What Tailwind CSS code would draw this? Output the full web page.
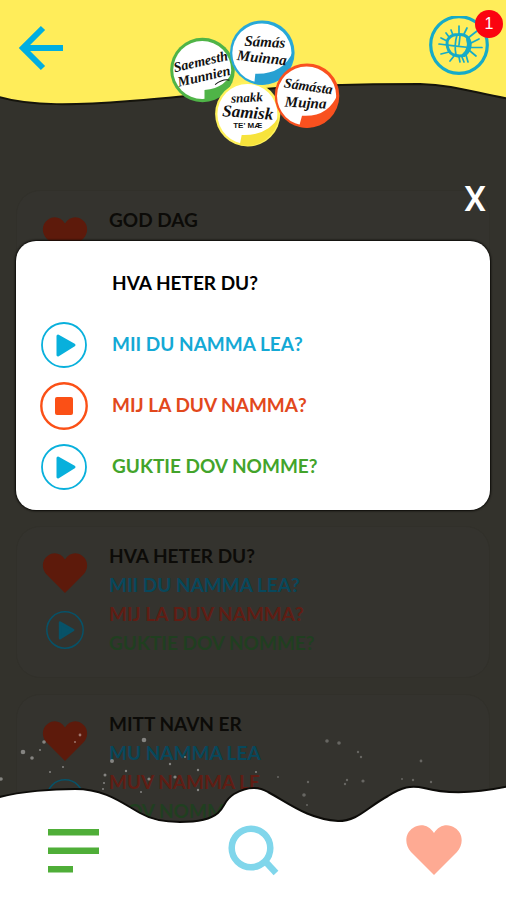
<!DOCTYPE html>
<html lang="no">
<head>
    <meta charset="UTF-8">
    <meta name="viewport" content="width=device-width, initial-scale=1.0">
    <title>Snakk samisk te' mæ</title>
    <script src="https://cdn.jsdelivr.net/npm/@tailwindcss/browser@4"></script>
</head>
<body class="bg-[#33322c] font-['Lato','Open_Sans',sans-serif] text-[19px] font-bold">
    <!-- Shared icons -->
    <svg class="hidden">
        <symbol id="heart" viewBox="0 0 56 50">
            <path d="M28 50 L5 27 C-2 19 -1 8 7 3 C14 -2 23 0 28 8 C33 0 42 -2 49 3 C57 8 58 19 51 27 Z" fill="currentColor"/>
        </symbol>
        <symbol id="play" viewBox="0 0 46 46">
            <circle cx="23" cy="23" r="22" fill="none" stroke="currentColor" stroke-width="1.8"/>
            <path d="M17 14 L33 23 L17 33 Z" fill="currentColor" stroke="currentColor" stroke-width="3" stroke-linejoin="round"/>
        </symbol>
        <symbol id="stop" viewBox="0 0 48 48">
            <circle cx="24" cy="24" r="22.7" fill="none" stroke="currentColor" stroke-width="2.4"/>
            <rect x="15" y="15" width="18" height="18" rx="2" fill="currentColor"/>
        </symbol>
    </svg>

    <div class="relative min-h-screen overflow-hidden">
        <!-- Header -->
        <header class="absolute inset-x-0 top-0 z-20">
            <svg class="absolute inset-x-0 top-0 -z-10 h-[106px] w-full" viewBox="0 0 506 106" preserveAspectRatio="none">
                <path d="M-4 96 C30 107 78 105 130 101 C180 97 225 92 265 89 C310 85 370 84 420 84 C455 85 475 93 510 99 V-4 H-4 Z" fill="#ffed5a" stroke="#15140c" stroke-width="2"/>
            </svg>
            <div class="grid grid-cols-3 items-start pt-4 pr-[17px] pl-[18px]">
                <a href="#" aria-label="Tilbake" class="mt-2 block w-12 text-[#00aee0]">
                    <svg class="h-12 w-12" viewBox="0 0 48 48" fill="none" stroke="currentColor" stroke-width="6">
                        <path d="M4 24 H45"/>
                        <path d="M25 4 L5 24 L25 44"/>
                    </svg>
                </a>
                <a href="#" aria-label="Hjem" class="mt-1 justify-self-center">
                    <svg class="h-32 w-[172px]" viewBox="168 20 172 128" font-family="'Liberation Serif', cursive" font-style="italic" font-weight="bold" text-anchor="middle" fill="#111">
                        <g transform="translate(202.5 70)">
                            <circle r="32.3" fill="#4fb447"/>
                            <circle r="29" cx="-.3" fill="#fff"/>
                            <path d="M2 20 V31 A31 31 0 0 0 31 -2 Q25 18 2 20" fill="#4fb447"/>
                            <g transform="rotate(-13)">
                                <text y="-4" font-size="14">Saemesth</text>
                                <text y="11" font-size="14">Munnien</text>
                                <path d="M9 17 Q18 13 24 16" fill="none" stroke="#111"/>
                            </g>
                        </g>
                        <g transform="translate(247.7 114)">
                            <circle r="32.6" fill="#fff25c"/>
                            <circle r="30" cx="-.3" fill="#fff"/>
                            <path d="M-6 21 L-8 31 A32 32 0 0 0 31 3 Q20 22 -6 21" fill="#f7e33c"/>
                            <text y="-12" font-size="13" transform="rotate(-3)">snakk</text>
                            <text y="4" font-size="17" transform="rotate(4)">Samisk</text>
                            <text y="14" font-size="8" font-style="normal" font-family="'Liberation Sans', sans-serif">TE' MÆ</text>
                        </g>
                        <g transform="translate(262.3 52.7)">
                            <circle r="32.3" fill="#27a8d8"/>
                            <circle r="29.6" cx="-.4" cy=".3" fill="#fff"/>
                            <path d="M-7 21 L-8 31 A32 32 0 0 0 31 -2 Q21 22 -7 21" fill="#27a0d2"/>
                            <text x="2" y="-6" font-size="15" transform="rotate(3)">Sámás</text>
                            <text y="10" font-size="15" transform="rotate(6)">Muinna</text>
                        </g>
                        <g transform="translate(307 95.7)">
                            <circle r="32.3" fill="#f9511f"/>
                            <circle r="29.6" cx="-.4" cy=".3" fill="#fff"/>
                            <path d="M-5 20 L-8 31 A32 32 0 0 0 31 -2 Q21 22 -5 20" fill="#f9511f"/>
                            <text y="-5" font-size="14" transform="rotate(8)">Sámásta</text>
                            <text x="-1" y="12" font-size="15" transform="rotate(3)">Mujna</text>
                        </g>
                    </svg>
                </a>
                <button type="button" aria-label="Varsler" class="relative h-[60px] w-[60px] justify-self-end">
                    <svg class="h-[60px] w-[60px]" viewBox="0 0 60 60" fill="none" stroke="#16abc8" stroke-linecap="round">
                        <circle cx="30" cy="29" r="28.3" stroke-width="3.2"/>
                        <path d="M29 18.5 Q36 18 39 22 Q42 26 41 31 Q40 36 36 38.500 Q32 41 27 39.500 Q20 38 18.500 31 Q17 25 20 22 Q23 18.500 29 18.500 Z" stroke-width="3"/>
                        <path d="M39 23 Q42 32 35 39" stroke-width="4"/>
                        <path d="M28 19 Q25 29 27 39 M10 28 Q25 30 40 31.500 M31 20 L30 29" stroke-width="1.700"/>
                        <path d="M30 17 L30 10 M35 18 L38 12 M39 22 L48 15 M42 27 L50 23 M42 31.500 L53 31.500 M41 35 L47 40 M37 39 L39 46 M33 41 L35 46 M30 41 L31 46 M25 40 L21 45 M20 36 L12 38 M18 25 L12 22 M20 21 L17 17 M24 19 L22 14" stroke-width="1.700"/>
                    </svg>
                    <span class="absolute -top-1.5 -right-3.5 grid h-7 w-7 place-items-center rounded-full bg-[#fb0410] font-['Liberation_Sans',sans-serif] text-base font-normal text-white">1</span>
                </button>
            </div>
        </header>

        <!-- Phrase list -->
        <main class="flex flex-col gap-4 px-4 pt-[190px]">
            <article class="flex h-[152px] gap-5 rounded-3xl border border-[#31302a] bg-[#34332e] pt-3.5 pl-6">
                <div class="flex w-12 flex-col items-center gap-[18px] pt-3">
                    <button type="button" aria-label="Favoritt" class="text-[#5d1a0b]"><svg class="h-10 w-[46px]"><use href="#heart"/></svg></button>
                    <button type="button" aria-label="Spill av" class="text-[#075268]"><svg class="h-[38px] w-[38px]"><use href="#play"/></svg></button>
                </div>
                <h2 class="leading-[29px] text-[#0c0b08]">GOD DAG</h2>
            </article>
            <article class="h-[152px] rounded-3xl border border-[#31302a] bg-[#34332e]"></article>
            <article class="flex h-[152px] gap-5 rounded-3xl border border-[#31302a] bg-[#34332e] pt-3.5 pl-6">
                <div class="flex w-12 flex-col items-center gap-[18px] pt-3">
                    <button type="button" aria-label="Favoritt" class="text-[#5d1a0b]"><svg class="h-10 w-[46px]"><use href="#heart"/></svg></button>
                    <button type="button" aria-label="Spill av" class="text-[#075268]"><svg class="h-[38px] w-[38px]"><use href="#play"/></svg></button>
                </div>
                <div class="leading-[29px]">
                    <h2 class="text-[#0c0b08]">HVA HETER DU?</h2>
                    <p class="text-[#08485c]">MII DU NAMMA LEA?</p>
                    <p class="text-[#601d14]">MIJ LA DUV NAMMA?</p>
                    <p class="text-[#203f20]">GUKTIE DOV NOMME?</p>
                </div>
            </article>
            <article class="flex h-[152px] gap-5 rounded-3xl border border-[#31302a] bg-[#34332e] pt-3.5 pl-6">
                <div class="flex w-12 flex-col items-center gap-[18px] pt-3">
                    <button type="button" aria-label="Favoritt" class="text-[#5d1a0b]"><svg class="h-10 w-[46px]"><use href="#heart"/></svg></button>
                    <button type="button" aria-label="Spill av" class="text-[#075268]"><svg class="h-[38px] w-[38px]"><use href="#play"/></svg></button>
                </div>
                <div class="leading-[29px]">
                    <h2 class="text-[#0c0b08]">MITT NAVN ER</h2>
                    <p class="text-[#08485c]">MU NAMMA LEA</p>
                    <p class="text-[#601d14]">MUV NAMMA LE</p>
                    <p class="text-[#203f20]">MOV NOMME</p>
                </div>
            </article>
        </main>

        <!-- Dialog -->
        <div role="dialog" aria-label="Hva heter du?" class="absolute inset-x-4 top-[180px] z-10">
            <div class="flex h-[61px] justify-end pr-1">
                <button type="button" aria-label="Lukk" class="h-10 font-['Roboto',sans-serif] text-[35px] leading-10 font-medium text-white">X</button>
            </div>
            <section class="rounded-[20px] bg-white pt-3 pb-[13px] pl-6 shadow-[0_0_2px_1px_#0b0a07]">
                <h1 class="flex h-[61px] items-center pl-[72px] text-black">HVA HETER DU?</h1>
                <div class="flex h-[61px] items-center gap-6 text-[#14a9d5]">
                    <button type="button" aria-label="Spill av" class="flex w-12 justify-center text-[#08b0dc]"><svg class="h-[46px] w-[46px]"><use href="#play"/></svg></button>
                    <p>MII DU NAMMA LEA?</p>
                </div>
                <div class="flex h-[61px] items-center gap-6 text-[#e2481c]">
                    <button type="button" aria-label="Stopp" class="flex w-12 justify-center text-[#fb5016]"><svg class="h-12 w-12"><use href="#stop"/></svg></button>
                    <p>MIJ LA DUV NAMMA?</p>
                </div>
                <div class="flex h-[61px] items-center gap-6 text-[#43a42b]">
                    <button type="button" aria-label="Spill av" class="flex w-12 justify-center text-[#08b0dc]"><svg class="h-[46px] w-[46px]"><use href="#play"/></svg></button>
                    <p>GUKTIE DOV NOMME?</p>
                </div>
            </section>
        </div>

        <!-- Bottom navigation -->
        <nav class="absolute inset-x-0 bottom-0 z-20">
            <svg class="absolute inset-x-0 bottom-0 -z-10 h-[170px] w-full" viewBox="0 730 506 170" preserveAspectRatio="none">
                <g fill="#fff" fill-opacity=".4">
                    <circle cx="23" cy="752" r="2.3"/><circle cx="32" cy="758" r="1.8"/><circle cx="44" cy="742" r="1.8"/><circle cx="40" cy="750" r="1"/>
                    <circle cx="80" cy="735" r="1.4"/><circle cx="75" cy="742" r="1"/><circle cx="1" cy="779" r="1.8"/><circle cx="50" cy="772" r="1"/>
                    <circle cx="63" cy="767" r="1"/><circle cx="105" cy="775" r="1.5"/><circle cx="112" cy="761" r="2"/><circle cx="126" cy="771" r="1.2"/>
                    <circle cx="144" cy="740" r="2.3"/><circle cx="149" cy="779" r="1.6"/><circle cx="170" cy="764" r="1.2"/><circle cx="175" cy="777" r="1.6"/>
                    <circle cx="185" cy="757" r="1"/><circle cx="198" cy="770" r="1.2"/><circle cx="198" cy="790" r="1.2"/><circle cx="103" cy="789" r="1"/>
                    <circle cx="104" cy="783" r="1"/><circle cx="141" cy="792" r="1"/><circle cx="256" cy="772" r="1"/>
                </g>
                <g fill="#fff" fill-opacity=".25">
                    <circle cx="327" cy="741" r="1.8"/><circle cx="339" cy="743" r="1.8"/><circle cx="358" cy="752" r="1.2"/><circle cx="361" cy="757" r="1.2"/>
                    <circle cx="347" cy="780" r="1.2"/><circle cx="345" cy="784" r="1.2"/><circle cx="363" cy="781" r="1.6"/><circle cx="421" cy="761" r="1.4"/>
                    <circle cx="413" cy="780" r="1.2"/><circle cx="431" cy="782" r="1.2"/><circle cx="308" cy="782" r="1.2"/><circle cx="304" cy="795" r="1.8"/>
                    <circle cx="307" cy="805" r="1"/><circle cx="278" cy="777" r="1"/><circle cx="402" cy="779" r="1"/>
                </g>
                <path d="M-4 798 C20 791 55 789 75 789 C105 789 122 803 140 813 C152 820 164 822 180 822 C193 822 210 820 218 813 C225 807 224 800 234 794 C246 787 258 786 268 792 C290 804 308 819 338 821 C358 821 366 808 388 796 C402 787 411 785 424 788 C450 795 478 793 510 786 V904 H-4 Z" fill="#fff" stroke="#0d0c09" stroke-width="2"/>
            </svg>
            <div class="flex items-center justify-between pr-11 pb-6 pl-12">
                <a href="#" aria-label="Meny" class="text-[#4fae38]">
                    <svg class="h-[52px] w-[52px]" viewBox="0 0 52 52" fill="currentColor">
                        <rect y="5" width="51" height="6.5"/>
                        <rect y="23.5" width="51" height="6.5"/>
                        <rect y="42" width="25" height="6.5"/>
                    </svg>
                </a>
                <a href="#" aria-label="Søk" class="text-[#80d6eb]">
                    <svg class="h-[52px] w-[52px]" viewBox="0 0 52 52" fill="none" stroke="currentColor" stroke-width="6.5">
                        <circle cx="24" cy="24" r="19.3"/>
                        <path d="M37 36 L49 49"/>
                    </svg>
                </a>
                <a href="#" aria-label="Favoritter" class="text-[#feaa93]">
                    <svg class="h-[50px] w-14"><use href="#heart"/></svg>
                </a>
            </div>
        </nav>
    </div>
</body>
</html>
